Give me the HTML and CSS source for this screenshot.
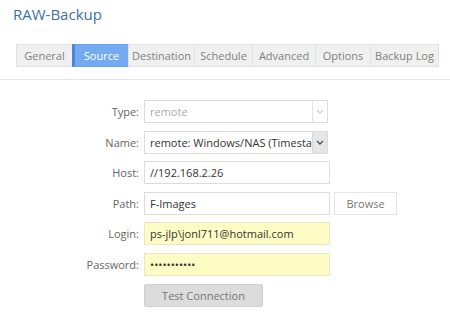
FILE: index.html
```html
<!DOCTYPE html>
<html lang="en">
<head>
    <meta charset="UTF-8">
    <title>RAW-Backup</title>
    <link rel="stylesheet" href="styles.css">
</head>
<body>
    <div class="header">
        <h1 class="title">RAW-Backup</h1>
        <div class="tabs">
            <div class="tab">General</div>
            <div class="tab active">Source</div>
            <div class="tab">Destination</div>
            <div class="tab">Schedule</div>
            <div class="tab">Advanced</div>
            <div class="tab">Options</div>
            <div class="tab">Backup Log</div>
        </div>
    </div>

    <div class="form">
        <label>Type:</label>
        <div class="select disabled">
            <span class="value">remote</span>
            <span class="arrow"><svg width="8" height="5" viewBox="0 0 8 5"><path d="M1 1l3 3 3-3" fill="none" stroke="#ccc" stroke-width="1.2"/></svg></span>
        </div>

        <label>Name:</label>
        <div class="select">
            <span class="value">remote: Windows/NAS (Timestamp)</span>
            <span class="arrow grey"><svg width="8" height="5" viewBox="0 0 8 5"><path d="M1 1l3 3 3-3" fill="none" stroke="#555" stroke-width="1.4"/></svg></span>
        </div>

        <label>Host:</label>
        <div class="field"><input type="text" value="//192.168.2.26" spellcheck="false"></div>

        <label>Path:</label>
        <div class="field">
            <input type="text" value="F-Images" spellcheck="false">
            <button class="browse">Browse</button>
        </div>

        <label>Login:</label>
        <div class="field"><input type="text" class="auto" value="ps-jlp\jonl711@hotmail.com" spellcheck="false"></div>

        <label>Password:</label>
        <div class="field"><input type="password" class="auto" value="abcdefghijk"></div>

        <span></span>
        <div class="field"><button class="test">Test Connection</button></div>
    </div>
</body>
</html>
```

FILE: styles.css
```css
*{
    margin: 0;
    padding: 0;
    box-sizing: border-box;
    font-family: 'Open Sans', 'Noto Sans', sans-serif;
}

body{
    background: #fff;
    color: #555;
    font-size: 11px;
}

.header{
    border-bottom: 1px solid #e4e4e4;
    padding: 4px 0 12px;
}

.title{
    font-size: 15px;
    font-weight: 400;
    color: #3b6fa8;
    margin-left: 13px;
    height: 40px;
}

.tabs{
    display: flex;
    margin-left: 16px;
}

.tab{
    height: 23px;
    line-height: 21px;
    background: #f0f0f0;
    border: 1px solid #e2e2e2;
    border-right: 0;
    color: #808080;
    text-align: center;
}
.tab:last-child{
    border-right: 1px solid #e2e2e2;
}
.tab:nth-child(1){ width: 56px; }
.tab:nth-child(2){ width: 56px; }
.tab:nth-child(3){ width: 66px; }
.tab:nth-child(4){ width: 58px; }
.tab:nth-child(5){ width: 63px; }
.tab:nth-child(6){ width: 55px; }
.tab:nth-child(7){ width: 69px; }

.tab.active{
    background: #74aaf0;
    color: #fff;
    border-color: #6a9fe4;
    border-left: 3px solid #4d86d6;
}

.form{
    display: grid;
    grid-template-columns: 139px 1fr;
    column-gap: 5px;
    row-gap: 7.6px;
    margin-top: 20px;
    align-items: center;
}

.form label{
    text-align: right;
    color: #666;
}

.select{
    width: 184px;
    height: 23px;
    border: 1px solid #dcdcdc;
    display: flex;
    background: #fff;
    overflow: hidden;
}
.select .value{
    flex: 1;
    line-height: 21px;
    padding-left: 5px;
    white-space: nowrap;
    overflow: hidden;
    color: #333;
}
.select.disabled .value{
    color: #aaa;
}
.select .arrow{
    width: 15px;
    border-left: 1px solid #e4e4e4;
    display: flex;
    align-items: center;
    justify-content: center;
}
.select .arrow.grey{
    background: #e6e6e6;
    border-left-color: #d8d8d8;
}

.field{
    display: flex;
    align-items: center;
}

.field input{
    width: 186px;
    height: 23px;
    border: 1px solid #dcdcdc;
    outline: 0;
    padding: 0 5px;
    font-size: 11px;
    color: #333;
    background: #fff;
}
.field input.auto{
    background: #fcfcc4;
    border-color: #e8e8c8;
}

.browse{
    margin-left: 4px;
    width: 63px;
    height: 23px;
    background: #fff;
    border: 1px solid #e4e4e4;
    color: #777;
    font-size: 11px;
}

.test{
    width: 119px;
    height: 23px;
    background: #dcdcdc;
    border: 1px solid #cfcfcf;
    border-radius: 2px;
    color: #777;
    font-size: 11px;
}
```
